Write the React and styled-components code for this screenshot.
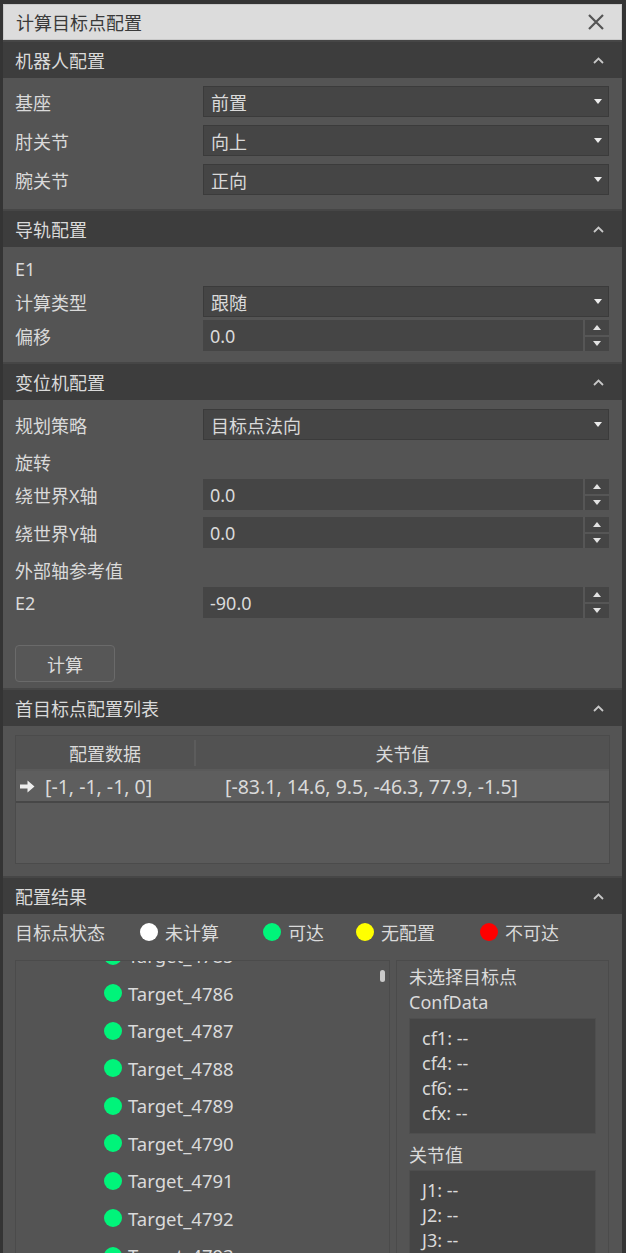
import React from 'react';
import styled, { createGlobalStyle } from 'styled-components';

const GlobalStyle = createGlobalStyle`
  body {
    margin: 0;
    background: #343434;
    font-family: "Noto Sans", "Noto Sans CJK SC", sans-serif;
  }
`;

const Window = styled.div`
  margin: 4px 4px 0 3px;
  height: 1249px;
  overflow: hidden;
  background: #545454;
  color: #dadada;
  font-size: 18px;
`;

const TitleBar = styled.div`
  display: flex;
  align-items: center;
  justify-content: space-between;
  box-sizing: border-box;
  height: 36px;
  padding: 0 17px 0 12px;
  background: #dcdcdc;
  border: 1px solid #c9c9c9;
  color: #3a3a3a;
`;

const Header = styled.div`
  display: flex;
  align-items: center;
  justify-content: space-between;
  height: 36px;
  padding: 0 18px 0 12px;
  background: #3d3d3d;
  border-top: 2px solid #464646;
`;

const Body = styled.div`
  display: flex;
  flex-direction: column;
  padding: ${(p) => p.$pad || '8px 13px 14px 12px'};
`;

const Row = styled.div`
  display: grid;
  grid-template-columns: 188px 1fr;
  align-items: center;
  height: 31px;
  margin-top: ${(p) => p.$mt || 0}px;
`;

const Label = styled.span`
  white-space: nowrap;
`;

const Select = styled.div`
  display: flex;
  align-items: center;
  justify-content: space-between;
  box-sizing: border-box;
  height: 31px;
  padding: 0 6px 0 7px;
  background: #454545;
  border: 1px solid #3b3b3b;
`;

const Caret = styled.span`
  width: 0;
  height: 0;
  border-left: 4.5px solid transparent;
  border-right: 4.5px solid transparent;
  border-top: 5px solid #ececec;
`;

const Spin = styled.div`
  display: flex;
  height: 31px;
  background: #454545;
`;

const SpinField = styled.div`
  flex: 1;
  display: flex;
  align-items: center;
  padding-left: 7px;
`;

const SpinButtons = styled.div`
  display: flex;
  flex-direction: column;
  width: 24px;
  border-left: 2px solid #565656;
`;

const SpinHalf = styled.div`
  flex: 1;
  display: flex;
  align-items: center;
  justify-content: center;
  & + & {
    border-top: 2px solid #565656;
  }
`;

const Tri = styled.span`
  width: 0;
  height: 0;
  border-left: 4px solid transparent;
  border-right: 4px solid transparent;
  ${(p) => (p.$up ? 'border-bottom: 5px solid #e2e2e2;' : 'border-top: 5px solid #e2e2e2;')}
`;

const Button = styled.button`
  width: 100px;
  height: 37px;
  margin-top: 27px;
  background: #575757;
  border: 1px solid #6a6a6a;
  border-radius: 4px;
  color: #dadada;
  font: inherit;
`;

const Table = styled.div`
  height: 129px;
  box-sizing: border-box;
  background: #5a5a5a;
  border: 1px solid #4b4b4b;
`;

const TableHead = styled.div`
  display: grid;
  grid-template-columns: 178px 1fr;
  align-items: center;
  height: 33px;
  background: #525252;
`;

const HeadCell = styled.div`
  text-align: center;
  & + & {
    border-left: 2px solid #5c5c5c;
  }
`;

const TableRow = styled.div`
  display: grid;
  grid-template-columns: 178px 1fr;
  align-items: center;
  height: 30px;
  margin-top: 2px;
  background: #5e5e5e;
  border-bottom: 2px solid #474747;
`;

const Cell = styled.div`
  display: flex;
  align-items: center;
  gap: 10px;
  padding-left: ${(p) => p.$pl || 0}px;
  font-size: 19.5px;
  white-space: nowrap;
`;

const Legend = styled.div`
  display: flex;
  align-items: center;
  height: 36px;
`;

const LegendItem = styled.div`
  display: flex;
  align-items: center;
  gap: 7px;
  width: ${(p) => p.$w}px;
`;

const Dot = styled.span`
  flex: none;
  width: 18px;
  height: 18px;
  border-radius: 50%;
  background: ${(p) => p.$c};
`;

const Results = styled.div`
  display: flex;
  gap: 6px;
  margin-top: 10px;
  height: 320px;
`;

const Tree = styled.div`
  position: relative;
  width: 375px;
  box-sizing: border-box;
  border: 1px solid #4b4b4b;
  overflow: hidden;
`;

const TreeList = styled.div`
  margin-top: -24px;
`;

const TreeItem = styled.div`
  display: flex;
  align-items: center;
  gap: 6px;
  height: 37.5px;
  padding-left: 88px;
  font-size: 18.5px;
`;

const Thumb = styled.div`
  position: absolute;
  top: 9px;
  right: 4px;
  width: 5px;
  height: 12px;
  border-radius: 3px;
  background: #c9c9c9;
`;

const Info = styled.div`
  flex: 1;
  box-sizing: border-box;
  padding: 4px 12px 0 12px;
  border: 1px solid #4b4b4b;
  line-height: 25px;
`;

const InfoTitle = styled.div`
  margin-top: ${(p) => p.$mt || 0}px;
`;

const InfoBox = styled.div`
  margin-top: ${(p) => p.$mt}px;
  padding: 7px 12px 7px;
  background: #454545;
  border: 1px solid #4e4e4e;
`;

const Chevron = () => (
  <svg width="11" height="7" viewBox="0 0 11 7">
    <polyline points="1,6 5.5,1.5 10,6" fill="none" stroke="#c8c8c8" strokeWidth="1.8" />
  </svg>
);

const Close = () => (
  <svg width="16" height="16" viewBox="0 0 16 16">
    <path d="M1 1 L15 15 M15 1 L1 15" stroke="#555" strokeWidth="2.2" />
  </svg>
);

const Arrow = () => (
  <svg width="15" height="13" viewBox="0 0 15 13">
    <path d="M0 4.5 H7.5 V0.5 L14.5 6.5 L7.5 12.5 V8.5 H0 Z" fill="#eeeeee" />
  </svg>
);

const Dropdown = ({ value }) => (
  <Select>
    {value}
    <Caret />
  </Select>
);

const SpinBox = ({ value }) => (
  <Spin>
    <SpinField>{value}</SpinField>
    <SpinButtons>
      <SpinHalf><Tri $up /></SpinHalf>
      <SpinHalf><Tri /></SpinHalf>
    </SpinButtons>
  </Spin>
);

const Section = ({ title, pad, children }) => (
  <>
    <Header>
      {title}
      <Chevron />
    </Header>
    <Body $pad={pad}>{children}</Body>
  </>
);

const targets = [4785, 4786, 4787, 4788, 4789, 4790, 4791, 4792, 4793];

const App = () => {
  return (
    <>
      <GlobalStyle />
      <Window>
        <TitleBar>
          计算目标点配置
          <Close />
        </TitleBar>

        <Section title="机器人配置">
          <Row><Label>基座</Label><Dropdown value="前置" /></Row>
          <Row $mt={8}><Label>肘关节</Label><Dropdown value="向上" /></Row>
          <Row $mt={8}><Label>腕关节</Label><Dropdown value="正向" /></Row>
        </Section>

        <Section title="导轨配置" pad="6px 13px 11px 12px">
          <Row><Label>E1</Label></Row>
          <Row $mt={2}><Label>计算类型</Label><Dropdown value="跟随" /></Row>
          <Row $mt={3}><Label>偏移</Label><SpinBox value="0.0" /></Row>
        </Section>

        <Section title="变位机配置" pad="9px 13px 6px 12px">
          <Row><Label>规划策略</Label><Dropdown value="目标点法向" /></Row>
          <Row $mt={6}><Label>旋转</Label></Row>
          <Row $mt={2}><Label>绕世界X轴</Label><SpinBox value="0.0" /></Row>
          <Row $mt={7}><Label>绕世界Y轴</Label><SpinBox value="0.0" /></Row>
          <Row $mt={6}><Label>外部轴参考值</Label></Row>
          <Row $mt={2}><Label>E2</Label><SpinBox value="-90.0" /></Row>
          <div><Button>计算</Button></div>
        </Section>

        <Section title="首目标点配置列表" pad="9px 12px 12px 12px">
          <Table>
            <TableHead>
              <HeadCell>配置数据</HeadCell>
              <HeadCell>关节值</HeadCell>
            </TableHead>
            <TableRow>
              <Cell $pl={4}><Arrow />[-1, -1, -1, 0]</Cell>
              <Cell $pl={31}>[-83.1, 14.6, 9.5, -46.3, 77.9, -1.5]</Cell>
            </TableRow>
          </Table>
        </Section>

        <Section title="配置结果" pad="0 13px 0 12px">
          <Legend>
            <LegendItem $w={125}>目标点状态</LegendItem>
            <LegendItem $w={123}><Dot $c="#ffffff" />未计算</LegendItem>
            <LegendItem $w={93}><Dot $c="#00f47a" />可达</LegendItem>
            <LegendItem $w={124}><Dot $c="#ffff00" />无配置</LegendItem>
            <LegendItem $w={110}><Dot $c="#ff0000" />不可达</LegendItem>
          </Legend>
          <Results>
            <Tree>
              <TreeList>
                {targets.map((n) => (
                  <TreeItem key={n}>
                    <Dot $c="#00f47a" />
                    Target_{n}
                  </TreeItem>
                ))}
              </TreeList>
              <Thumb />
            </Tree>
            <Info>
              <InfoTitle>未选择目标点</InfoTitle>
              <InfoTitle>ConfData</InfoTitle>
              <InfoBox $mt={3}>
                <div>cf1: --</div>
                <div>cf4: --</div>
                <div>cf6: --</div>
                <div>cfx: --</div>
              </InfoBox>
              <InfoTitle $mt={9}>关节值</InfoTitle>
              <InfoBox $mt={2}>
                <div>J1: --</div>
                <div>J2: --</div>
                <div>J3: --</div>
                <div>J4: --</div>
              </InfoBox>
            </Info>
          </Results>
        </Section>
      </Window>
    </>
  );
};

export default App;
